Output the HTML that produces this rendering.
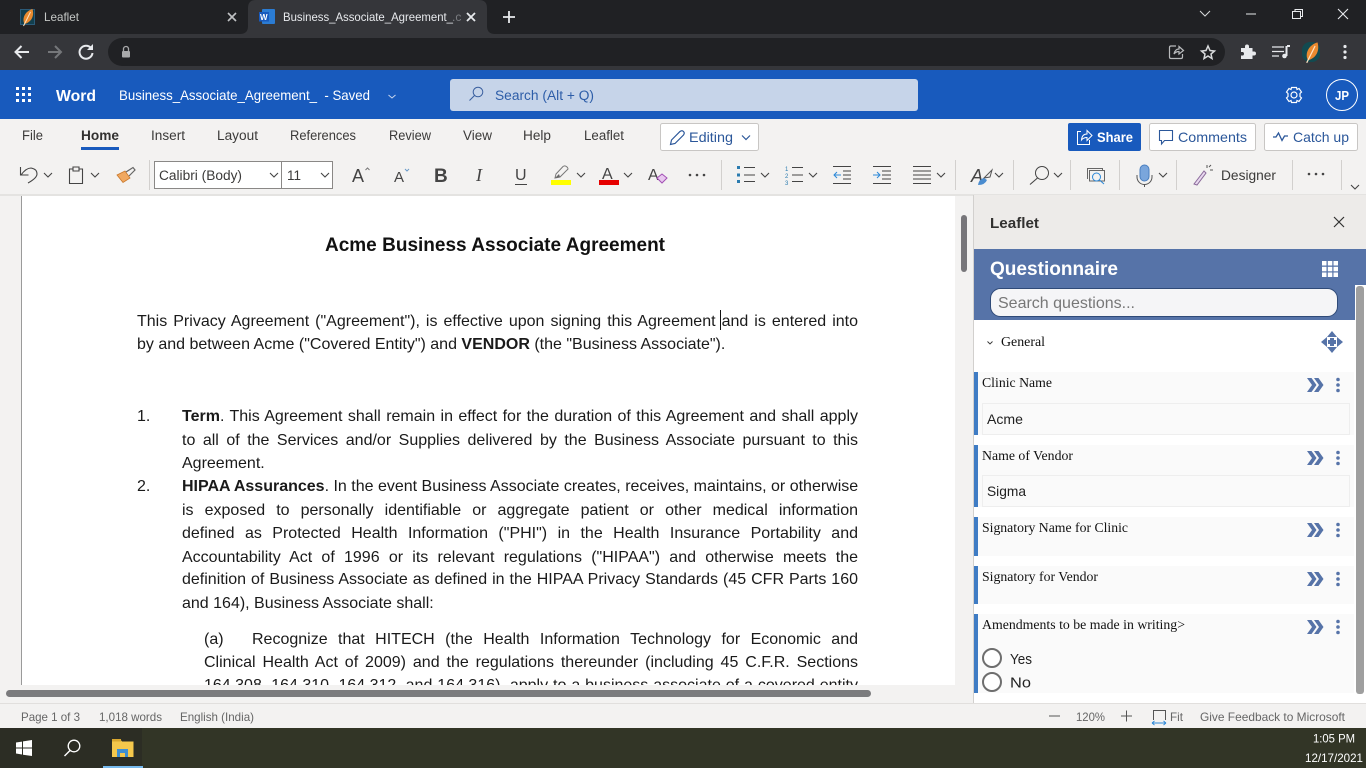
<!DOCTYPE html>
<html><head><meta charset="utf-8"><title>Business_Associate_Agreement</title>
<style>
html,body{margin:0;padding:0;width:1366px;height:768px;overflow:hidden;background:#f3f2f1}
svg{position:absolute;left:0;top:0}
text{font-family:"Liberation Sans",sans-serif;white-space:pre}
text.s{font-family:"Liberation Serif",serif}
#doc{position:absolute;left:22px;top:195px;width:933px;height:490px;background:#fff;overflow:hidden;font-family:"Liberation Sans",sans-serif;font-size:16px;color:#1a1a1a}
#doc div{position:absolute;height:23px;line-height:23px;margin-top:1px;white-space:nowrap;text-align:justify;text-align-last:justify}
#doc b{font-weight:bold}
#doc .n{text-align-last:left}
</style></head><body>
<svg width="1366" height="768" viewBox="0 0 1366 768" style="z-index:1">
<defs>
<path id="cv" d="M-4-2L0 2L4-2" fill="none" stroke="#444" stroke-width="1.1"/>
<path id="dchev" d="M-8-7H-3.500L1.500 0L-3.500 7H-8L-3 0ZM-1-7H3.500L8.500 0L3.500 7H-1L4 0Z" fill="#5673a8"/>
<g id="keb" fill="#5673a8"><circle cx="0" cy="-5.500" r="1.800"/><circle cx="0" cy="0" r="1.800"/><circle cx="0" cy="5.500" r="1.800"/></g>
<g id="leaf"><path d="M-3 7C-6 1-2-6 5-8C7-1 4 5-3 7Z" fill="#e98a2f"/><path d="M-4 9L3-5" stroke="#fde6c4" stroke-width="1"/></g>
</defs>
<!-- chrome -->
<rect width="1366" height="34" fill="#202124"/>
<rect y="34" width="1366" height="36" fill="#35363a"/>
<path d="M240 34Q248 34 248 26V8Q248 0 256 0H479Q487 0 487 8V26Q487 34 495 34Z" fill="#35363a"/>
<rect x="108" y="38" width="1117" height="28" rx="14" fill="#202124"/>
<rect x="20.500" y="9.500" width="14" height="15" fill="#123f4e" stroke="#2b5a78"/><use href="#leaf" x="27.500" y="17"/>
<text x="44" y="21" font-size="12" fill="#c4c7c5" textLength="35" lengthAdjust="spacingAndGlyphs">Leaflet</text>
<path d="M228 13L236 21M236 13L228 21" stroke="#c0c2c4" stroke-width="1.6"/>
<rect x="262" y="9" width="13" height="15" rx="1" fill="#2b7cd3"/><rect x="259" y="12" width="10" height="9.500" fill="#185abd"/><text x="260" y="20" font-size="8" font-weight="bold" fill="#fff">W</text>
<text x="283" y="21" font-size="12" fill="#e8eaed" textLength="170" lengthAdjust="spacingAndGlyphs">Business_Associate_Agreement_</text>
<text x="452" y="21" font-size="12" fill="#7a7c80">.c</text>
<path d="M467 13L475 21M475 13L467 21" stroke="#e8eaed" stroke-width="1.8"/>
<path d="M509 11V23M503 17H515" stroke="#e8eaed" stroke-width="1.8"/>
<path d="M1200 11L1205 16L1210 11" fill="none" stroke="#d8dadc" stroke-width="1"/>
<path d="M1246 14H1256" stroke="#e8eaed" stroke-width="1"/>
<path d="M1292.500 11.500H1300.500V18.500H1292.500ZM1295 11.500V9.500H1302.500V16.500H1300.500" fill="none" stroke="#e8eaed" stroke-width="1"/>
<path d="M1338 9L1348 19M1348 9L1338 19" stroke="#e8eaed" stroke-width="1.1"/>
<path d="M29 52H16M21.500 46L15.500 52L21.500 58" fill="none" stroke="#e8eaed" stroke-width="2"/>
<path d="M61 52H48M55 46L61 52L55 58" fill="none" stroke="#75777a" stroke-width="2"/>
<path d="M91 48A6.500 6.500 0 1 0 92.500 53" fill="none" stroke="#e8eaed" stroke-width="2"/><path d="M93 44V50H87Z" fill="#e8eaed"/>
<rect x="122" y="51" width="8" height="6.500" rx="1" fill="#a8a9ab"/><path d="M123.500 51V49A2.500 2.500 0 0 1 128.500 49V51" fill="none" stroke="#a8a9ab" stroke-width="1.300"/>
<path d="M1176 46H1171Q1169.500 46 1169.500 47.500V57Q1169.500 58.500 1171 58.500H1181Q1182.500 58.500 1182.500 57V54M1174 54Q1175 49 1179 49V46.500L1183.500 50.500L1179 54V51.500Q1176 51.500 1174 54Z" fill="none" stroke="#b8babc" stroke-width="1.200"/>
<path d="M1208 46L1210 50.500L1214.500 51L1211 54L1212 58.500L1208 56L1204 58.500L1205 54L1201.500 51L1206 50.500Z" fill="none" stroke="#d8dadc" stroke-width="1.500"/>
<path d="M1241 48H1245V46.500A2 2 0 0 1 1249 46.500V48H1252.500V51.500H1254A2 2 0 0 1 1254 55.500H1252.500V59H1241V55.500H1243A2 2 0 0 0 1243 52H1241Z" fill="#e8eaed"/>
<path d="M1272 47H1284M1272 51.500H1284M1272 56H1279" stroke="#e8eaed" stroke-width="1.300"/><path d="M1287 46H1290M1286.500 46V56" stroke="#e8eaed" stroke-width="2"/><circle cx="1284.500" cy="56" r="2.300" fill="#e8eaed"/>
<rect x="1302" y="42" width="18" height="20" rx="8" fill="#124a50"/><g transform="translate(1311.500 52) scale(1.2)"><use href="#leaf"/></g>
<g fill="#e8eaed"><circle cx="1345" cy="46.500" r="1.600"/><circle cx="1345" cy="52" r="1.600"/><circle cx="1345" cy="57.500" r="1.600"/></g>
<!-- word header -->
<rect y="70" width="1366" height="49" fill="#185abd"/>
<g fill="#fff"><rect x="16" y="87" width="3" height="3"/><rect x="22" y="87" width="3" height="3"/><rect x="28" y="87" width="3" height="3"/><rect x="16" y="93" width="3" height="3"/><rect x="22" y="93" width="3" height="3"/><rect x="28" y="93" width="3" height="3"/><rect x="16" y="99" width="3" height="3"/><rect x="22" y="99" width="3" height="3"/><rect x="28" y="99" width="3" height="3"/></g>
<text x="56" y="101" font-size="16" font-weight="bold" fill="#fff" textLength="40" lengthAdjust="spacingAndGlyphs">Word</text>
<text x="119" y="100" font-size="14" fill="#fff" textLength="251" lengthAdjust="spacingAndGlyphs">Business_Associate_Agreement_  - Saved</text>
<path d="M388.500 95L392 98L395.500 95" fill="none" stroke="#c8d6ee" stroke-width="1"/>
<rect x="450" y="79" width="468" height="32" rx="3" fill="#c6d4e9"/>
<circle cx="478" cy="92" r="4.800" fill="none" stroke="#3a5f9f" stroke-width="1"/><path d="M474.500 95.500L469.500 100.500" stroke="#3a5f9f" stroke-width="1.100"/>
<text x="495" y="100" font-size="13.500" fill="#2d5da8" textLength="99" lengthAdjust="spacingAndGlyphs">Search (Alt + Q)</text>
<circle cx="1294" cy="95" r="3" fill="none" stroke="#fff" stroke-width="1.200"/><path d="M1291.500 87.500H1296.500L1297 89.500L1299 88.500L1301.500 92L1300 93.500V96.500L1301.500 98L1299 101.500L1297 100.500L1296.500 102.500H1291.500L1291 100.500L1289 101.500L1286.500 98L1288 96.500V93.500L1286.500 92L1289 88.500L1291 89.500Z" fill="none" stroke="#fff" stroke-width="1.200"/>
<circle cx="1342" cy="95" r="15.500" fill="none" stroke="#fff" stroke-width="1"/>
<text x="1335" y="100" font-size="13" font-weight="bold" fill="#fff" textLength="14" lengthAdjust="spacingAndGlyphs">JP</text>
<!-- ribbon -->
<rect y="119" width="1366" height="76" fill="#f3f2f1"/>
<rect y="194" width="1366" height="2" fill="#e4e3e1"/>
<g font-size="13.500" fill="#3b3a39">
<text x="22" y="140" textLength="21" lengthAdjust="spacingAndGlyphs">File</text>
<text x="81" y="140" font-weight="bold" fill="#323130" textLength="38" lengthAdjust="spacingAndGlyphs">Home</text>
<text x="151" y="140" textLength="34" lengthAdjust="spacingAndGlyphs">Insert</text>
<text x="217" y="140" textLength="41" lengthAdjust="spacingAndGlyphs">Layout</text>
<text x="290" y="140" textLength="66" lengthAdjust="spacingAndGlyphs">References</text>
<text x="389" y="140" textLength="42" lengthAdjust="spacingAndGlyphs">Review</text>
<text x="463" y="140" textLength="29" lengthAdjust="spacingAndGlyphs">View</text>
<text x="523" y="140" textLength="28" lengthAdjust="spacingAndGlyphs">Help</text>
<text x="584" y="140" textLength="40" lengthAdjust="spacingAndGlyphs">Leaflet</text>
</g>
<rect x="81" y="147" width="38" height="3" fill="#185abd"/>
<rect x="660.500" y="123.500" width="98" height="27" rx="2" fill="#fff" stroke="#c8c6c4"/>
<path d="M670.500 144.500L671.500 140L680 131.500Q682 130 683.500 131.500T683.500 135L675 143.500Z" fill="none" stroke="#2b579a" stroke-width="1.200"/>
<text x="689" y="142" font-size="14" fill="#2b579a" textLength="44" lengthAdjust="spacingAndGlyphs">Editing</text>
<path d="M742 135.500L746 139.500L750 135.500" fill="none" stroke="#2b579a" stroke-width="1.200"/>
<rect x="1068" y="123" width="73" height="28" rx="2" fill="#185abd"/>
<path d="M1081 131.500H1077.500V144.500H1089.500V140M1081.500 140Q1082 134 1087 134V130.500L1092 135.500L1087 140.500V137.500Q1083.500 137.500 1081.500 140Z" fill="none" stroke="#fff" stroke-width="1"/>
<text x="1097" y="142" font-size="14" font-weight="bold" fill="#fff" textLength="36" lengthAdjust="spacingAndGlyphs">Share</text>
<rect x="1149.500" y="123.500" width="106" height="27" rx="2" fill="#fff" stroke="#c8c6c4"/>
<path d="M1159.500 130.500H1172.500V140.500H1164.500L1161.500 144V140.500H1159.500Z" fill="none" stroke="#2b579a" stroke-width="1.100"/>
<text x="1178" y="142" font-size="14" fill="#2b579a" textLength="69" lengthAdjust="spacingAndGlyphs">Comments</text>
<rect x="1264.500" y="123.500" width="93" height="27" rx="2" fill="#fff" stroke="#c8c6c4"/>
<path d="M1273 137H1276L1278.500 133L1282 140.500L1284.500 136H1288" fill="none" stroke="#2b579a" stroke-width="1.300"/>
<text x="1293" y="142" font-size="14" fill="#2b579a" textLength="56" lengthAdjust="spacingAndGlyphs">Catch up</text>
<!-- row 2 icons -->
<path d="M20.500 167V175H28.500M21 175Q26 168 31 168Q37 169 37 174Q37 178 28 183" fill="none" stroke="#444" stroke-width="1.100"/><use href="#cv" x="48" y="175"/>
<path d="M73 169H69.500V183.500H82.500V169H79M73 167H79V171H73Z" fill="none" stroke="#444" stroke-width="1.100"/><use href="#cv" x="95" y="175"/>
<path d="M117 175L125 171L130 178L123 182.500Z" fill="#f0a860" stroke="#c9772a" stroke-width=".8"/><path d="M126 172L133 167.500L135 170L129 176" fill="none" stroke="#666" stroke-width="1.200"/>
<path d="M149.500 160V190M721.500 160V190M955.500 160V190M1013.500 160V190M1070.500 160V190M1119.500 160V190M1176.500 160V190M1292.500 160V190M1341.500 160V190" stroke="#d2d0ce"/>
<rect x="154.500" y="161.500" width="127" height="27" fill="#fff" stroke="#8a8886"/>
<rect x="281.500" y="161.500" width="51" height="27" fill="#fff" stroke="#8a8886"/>
<text x="159" y="180" font-size="13.500" fill="#3b3a39" textLength="83" lengthAdjust="spacingAndGlyphs">Calibri (Body)</text>
<text x="287" y="180" font-size="13.500" fill="#3b3a39">11</text>
<use href="#cv" x="274" y="175"/><use href="#cv" x="325" y="175"/>
<text x="352" y="182" font-size="18" fill="#444">A</text><path d="M365.500 170L367.500 168L369.500 170" fill="none" stroke="#777"/>
<text x="394" y="182" font-size="15" fill="#444">A</text><path d="M405 169L407 171L409 169" fill="none" stroke="#6a9ac8"/>
<text x="434" y="182" font-size="19" font-weight="bold" fill="#444">B</text>
<text class="s" x="476" y="181" font-size="18" font-style="italic" fill="#444">I</text>
<text x="515" y="180" font-size="16" fill="#444">U</text><path d="M515 184.500H527" stroke="#444"/>
<path d="M556 174L563 166.500Q565 165 567 167T567 170L560 177L555 178Z" fill="none" stroke="#777" stroke-width="1"/><path d="M555 178L559 174L560 177Z" fill="#666"/><rect x="551" y="180" width="20" height="5" fill="#ffff00"/><use href="#cv" x="581" y="175"/>
<text x="602" y="179" font-size="16" fill="#444">A</text><rect x="599" y="180" width="20" height="5" fill="#e60000"/><use href="#cv" x="628" y="175"/>
<text x="648" y="180" font-size="16" fill="#444">A</text><path d="M657 178L662 174L667 178L662 183Z" fill="#e8c8ef" stroke="#a24fb4"/>
<g fill="#444"><circle cx="690" cy="175" r="1.300"/><circle cx="697" cy="175" r="1.300"/><circle cx="704" cy="175" r="1.300"/></g>
<path d="M744 167.500H755M744 175H755M744 181.500H755" stroke="#444" stroke-width="1"/><path d="M737 166H740V169H737ZM737 173.500H740V176.500H737ZM737 180H740V183H737Z" fill="#2b7cb0"/><use href="#cv" x="765" y="175"/>
<path d="M792 167.500H803M792 175H803M792 181.500H803" stroke="#444" stroke-width="1"/><text x="785" y="171" font-size="6" fill="#2b7cb0">1</text><text x="785" y="178" font-size="6" fill="#2b7cb0">2</text><text x="785" y="185" font-size="6" fill="#2b7cb0">3</text><use href="#cv" x="813" y="175"/>
<path d="M833 166.500H851M843 171H851M843 175H851M843 179H851M833 183.500H851" stroke="#444"/><path d="M841 175H834M837 172L834 175L837 178" fill="none" stroke="#2b88d8"/>
<path d="M873 166.500H891M882 171H891M882 175H891M882 179H891M873 183.500H891" stroke="#444"/><path d="M873 175H880M877 172L880 175L877 178" fill="none" stroke="#2b88d8"/>
<path d="M913 166.500H931M913 171H931M913 175H931M913 179H931M913 183.500H931" stroke="#444"/><use href="#cv" x="941" y="175"/>
<text x="971" y="182" font-size="18" font-style="italic" fill="#444">A</text><path d="M984 178L992 170L990 177Z" fill="none" stroke="#555"/><path d="M978 185Q979 179 984 178L987 180Q985 185 978 185Z" fill="#4a8ccf"/><use href="#cv" x="999" y="175"/>
<circle cx="1042" cy="173" r="6.500" fill="none" stroke="#444" stroke-width="1"/><path d="M1037.500 178L1030 184.500" stroke="#444" stroke-width="1.100"/><use href="#cv" x="1058" y="175"/>
<path d="M1087.500 179V168.500H1102.500V171M1089.500 181V170.500H1104.500V181Z" fill="none" stroke="#666"/><circle cx="1096.500" cy="177" r="4" fill="#f3f2f1" stroke="#2b88d8"/><path d="M1099.500 180L1104 184" stroke="#2b88d8"/>
<rect x="1140" y="165" width="9" height="16" rx="4.500" fill="#7aa6dc" stroke="#4a7fc0"/><path d="M1137 175V177A7.500 7.500 0 0 0 1152 177V175M1144.500 184.500V187" fill="none" stroke="#555"/><use href="#cv" x="1163" y="175"/>
<path d="M1194 184L1204 171L1206 173L1197 185Z" fill="#e8d8ef" stroke="#8a6a9a"/><path d="M1207 165V168M1210 170H1213M1209 167L1211 165" stroke="#555"/>
<text x="1221" y="180" font-size="13.500" fill="#3b3a39" textLength="55" lengthAdjust="spacingAndGlyphs">Designer</text>
<g fill="#444"><circle cx="1309" cy="174" r="1.300"/><circle cx="1316" cy="174" r="1.300"/><circle cx="1323" cy="174" r="1.300"/></g>
<use href="#cv" x="1355" y="187"/>
</svg>

<div id="doc">
<div class="n" style="left:303px;top:38px;font-size:19px;font-weight:bold;line-height:23px;width:340px;text-align-last:justify;color:#111">Acme Business Associate Agreement</div>
<div style="left:115px;top:114px;width:721px">This Privacy Agreement ("Agreement"), is effective upon signing this Agreement and is entered into</div>
<div style="left:115px;top:137px;width:586px">by and between Acme ("Covered Entity") and <b>VENDOR</b> (the "Business Associate").</div>
<div class="n" style="left:115px;top:209px">1.</div>
<div style="left:160px;top:209px;width:676px"><b>Term</b>. This Agreement shall remain in effect for the duration of this Agreement and shall apply</div>
<div style="left:160px;top:233px;width:676px">to all of the Services and/or Supplies delivered by the Business Associate pursuant to this</div>
<div class="n" style="left:160px;top:256px">Agreement.</div>
<div class="n" style="left:115px;top:279px">2.</div>
<div style="left:160px;top:279px;width:676px"><b>HIPAA Assurances</b>. In the event Business Associate creates, receives, maintains, or otherwise</div>
<div style="left:160px;top:303px;width:676px">is exposed to personally identifiable or aggregate patient or other medical information</div>
<div style="left:160px;top:326px;width:676px">defined as Protected Health Information ("PHI") in the Health Insurance Portability and</div>
<div style="left:160px;top:350px;width:676px">Accountability Act of 1996 or its relevant regulations ("HIPAA") and otherwise meets the</div>
<div style="left:160px;top:372px;width:676px">definition of Business Associate as defined in the HIPAA Privacy Standards (45 CFR Parts 160</div>
<div class="n" style="left:160px;top:396px">and 164), Business Associate shall:</div>
<div class="n" style="left:182px;top:432px">(a)</div>
<div style="left:230px;top:432px;width:606px">Recognize that HITECH (the Health Information Technology for Economic and</div>
<div style="left:182px;top:455px;width:654px">Clinical Health Act of 2009) and the regulations thereunder (including 45 C.F.R. Sections</div>
<div style="left:182px;top:478px;width:654px">164.308, 164.310, 164.312, and 164.316), apply to a business associate of a covered entity</div>
<span style="position:absolute;left:698px;top:115px;width:1px;height:20px;background:#111"></span>
</div>

<svg width="1366" height="768" viewBox="0 0 1366 768" style="z-index:2;pointer-events:none">
<!-- doc side decorations -->
<rect x="21" y="196" width="1" height="489" fill="#9a9a9a"/>
<rect x="961" y="215" width="6" height="57" rx="3" fill="#77767a"/>
<rect x="973" y="195" width="1" height="508" fill="#d2d0ce"/>
<rect x="6" y="690" width="865" height="7" rx="3.500" fill="#7b7b7d"/>
<!-- sidebar -->
<rect x="974" y="195" width="392" height="54" fill="#edebe9"/>
<text x="990" y="228" font-size="15" font-weight="bold" fill="#323130" textLength="49" lengthAdjust="spacingAndGlyphs">Leaflet</text>
<path d="M1334 217L1344 227M1344 217L1334 227" stroke="#323130" stroke-width="1.200"/>
<rect x="974" y="249" width="392" height="71" fill="#5673a8"/>
<text x="990" y="275" font-size="19.500" font-weight="bold" fill="#fff" textLength="128" lengthAdjust="spacingAndGlyphs">Questionnaire</text>
<g fill="#fff"><rect x="1322" y="261" width="4.500" height="4.500"/><rect x="1327.800" y="261" width="4.500" height="4.500"/><rect x="1333.500" y="261" width="4.500" height="4.500"/><rect x="1322" y="266.800" width="4.500" height="4.500"/><rect x="1327.800" y="266.800" width="4.500" height="4.500"/><rect x="1333.500" y="266.800" width="4.500" height="4.500"/><rect x="1322" y="272.500" width="4.500" height="4.500"/><rect x="1327.800" y="272.500" width="4.500" height="4.500"/><rect x="1333.500" y="272.500" width="4.500" height="4.500"/></g>
<rect x="990.500" y="288.500" width="347" height="28" rx="10" fill="#f5f5f7" stroke="#2f4a78"/>
<text x="998" y="308" font-size="16" fill="#777" textLength="137" lengthAdjust="spacingAndGlyphs">Search questions...</text>
<rect x="974" y="320" width="392" height="383" fill="#fff"/>
<rect x="1355" y="285" width="11" height="418" fill="#fff"/>
<rect x="1356" y="286" width="8" height="408" rx="3" fill="#9f9f9f"/>
<path d="M987.500 341.500L990 344L992.500 341.500" fill="none" stroke="#333" stroke-width=".9"/>
<text class="s" x="1001" y="346" font-size="14" fill="#111" textLength="44" lengthAdjust="spacingAndGlyphs">General</text>
<g fill="#5673a8"><path d="M1332 331L1337 337H1327ZM1332 353L1327 347H1337ZM1321 342L1327 337V347ZM1343 342L1337 347V337Z"/><rect x="1328" y="340" width="8" height="4"/><rect x="1330" y="338" width="4" height="8"/></g>
<!-- cards -->
<g fill="#fafafa"><rect x="974" y="372" width="380" height="63"/><rect x="974" y="445" width="380" height="62"/><rect x="974" y="517" width="380" height="39"/><rect x="974" y="566" width="380" height="38"/><rect x="974" y="614" width="380" height="79"/></g>
<g fill="#3f7cc4"><rect x="974" y="372" width="4" height="63"/><rect x="974" y="445" width="4" height="62"/><rect x="974" y="517" width="4" height="39"/><rect x="974" y="566" width="4" height="38"/><rect x="974" y="614" width="4" height="79"/></g>
<rect x="982.500" y="403.500" width="367" height="31" fill="#fafafa" stroke="#eeeeee"/>
<rect x="982.500" y="475.500" width="367" height="31" fill="#fafafa" stroke="#eeeeee"/>
<g font-size="14" fill="#111">
<text class="s" x="982" y="387" textLength="70" lengthAdjust="spacingAndGlyphs">Clinic Name</text>
<text class="s" x="982" y="460" textLength="91" lengthAdjust="spacingAndGlyphs">Name of Vendor</text>
<text class="s" x="982" y="532" textLength="146" lengthAdjust="spacingAndGlyphs">Signatory Name for Clinic</text>
<text class="s" x="982" y="581" textLength="116" lengthAdjust="spacingAndGlyphs">Signatory for Vendor</text>
<text class="s" x="982" y="629" textLength="203" lengthAdjust="spacingAndGlyphs">Amendments to be made in writing&gt;</text>
</g>
<text x="987" y="424" font-size="14" fill="#222" textLength="36" lengthAdjust="spacingAndGlyphs">Acme</text>
<text x="987" y="496" font-size="14" fill="#222" textLength="39" lengthAdjust="spacingAndGlyphs">Sigma</text>
<use href="#dchev" x="1315" y="385"/><use href="#keb" x="1338" y="385"/>
<use href="#dchev" x="1315" y="458"/><use href="#keb" x="1338" y="458"/>
<use href="#dchev" x="1315" y="530"/><use href="#keb" x="1338" y="530"/>
<use href="#dchev" x="1315" y="579"/><use href="#keb" x="1338" y="579"/>
<use href="#dchev" x="1315" y="627"/><use href="#keb" x="1338" y="627"/>
<circle cx="992" cy="658" r="9" fill="#fff" stroke="#6e6e6e" stroke-width="2"/>
<circle cx="992" cy="682" r="9" fill="#fff" stroke="#6e6e6e" stroke-width="2"/>
<text x="1010" y="664" font-size="15" fill="#222" textLength="22" lengthAdjust="spacingAndGlyphs">Yes</text>
<text x="1010" y="687.500" font-size="15" fill="#222" textLength="21" lengthAdjust="spacingAndGlyphs">No</text>
<!-- status -->
<rect y="703" width="1366" height="25" fill="#f3f2f1"/>
<rect y="703" width="1366" height="1" fill="#e1dfdd"/>
<g font-size="12" fill="#666">
<text x="21" y="721" textLength="59" lengthAdjust="spacingAndGlyphs">Page 1 of 3</text>
<text x="99" y="721" textLength="63" lengthAdjust="spacingAndGlyphs">1,018 words</text>
<text x="180" y="721" textLength="74" lengthAdjust="spacingAndGlyphs">English (India)</text>
<text x="1076" y="721" textLength="29" lengthAdjust="spacingAndGlyphs">120%</text>
<text x="1170" y="721" textLength="13" lengthAdjust="spacingAndGlyphs">Fit</text>
<text x="1200" y="721" textLength="145" lengthAdjust="spacingAndGlyphs">Give Feedback to Microsoft</text>
</g>
<path d="M1049 716H1060M1121 716H1132M1126.500 710.500V721.500" stroke="#555" stroke-width="1"/>
<path d="M1153.500 720V710.500H1165.500V720" fill="none" stroke="#555"/><path d="M1152 723H1166M1152 723L1154.500 721M1152 723L1154.500 725M1166 723L1163.500 721M1166 723L1163.500 725" fill="none" stroke="#2b88d8" stroke-width=".9"/>
<!-- taskbar -->
<rect y="728" width="1366" height="40" fill="#323526"/>
<rect y="728" width="142" height="40" fill="#2c2d24"/>
<path d="M16 742.500L22 741.600V747.500H16ZM23 741.400L32 740V747.500H23ZM16 748.500H22V754.500L16 753.500ZM23 748.500H32V756L23 754.700Z" fill="#fff"/>
<circle cx="74" cy="746" r="5.800" fill="none" stroke="#fff" stroke-width="1.300"/><path d="M70 750.500L64.500 756" stroke="#fff" stroke-width="1.400"/>
<path d="M112 739H120L122 741.500H133.500V757H112Z" fill="#f5c84c"/><rect x="112" y="739" width="9" height="2.500" fill="#d9a72f"/><rect x="117" y="749" width="11" height="8" fill="#3f8fd2"/><rect x="120" y="753" width="5" height="4" fill="#f5c84c"/>
<rect x="103" y="766" width="40" height="2" fill="#76b9ed"/>
<text x="1313" y="742.500" font-size="12" fill="#fff" textLength="42" lengthAdjust="spacingAndGlyphs">1:05 PM</text>
<text x="1305" y="762" font-size="12" fill="#fff" textLength="58" lengthAdjust="spacingAndGlyphs">12/17/2021</text>
</svg>
</body></html>
